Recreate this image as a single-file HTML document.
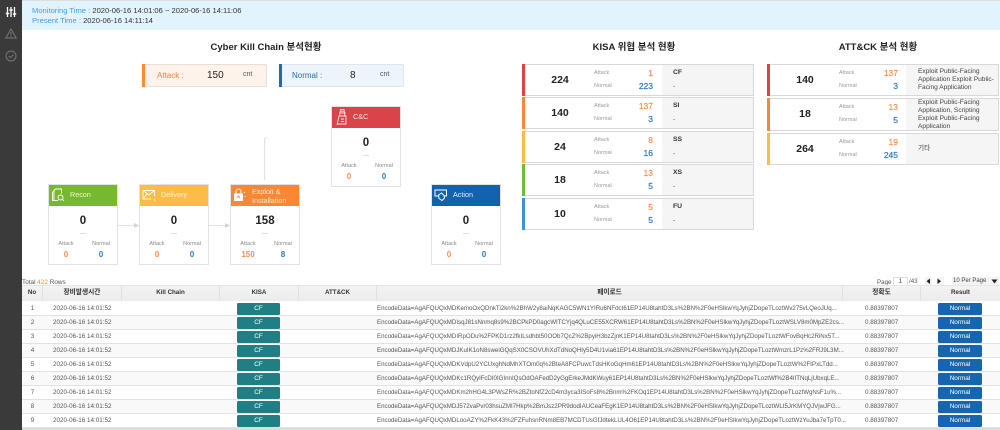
<!DOCTYPE html>
<html lang="ko"><head><meta charset="utf-8"><title>Dashboard</title>
<style>
*{box-sizing:border-box}
html,body{margin:0;padding:0;width:1000px;height:430px;overflow:hidden;background:#fff}
body{font-family:"Liberation Sans","Noto Sans CJK KR",sans-serif;color:#333;position:relative;filter:blur(.3px)}
div{position:absolute;white-space:nowrap}
.side{left:0;top:0;width:22px;height:430px;background:#3a3a3a}
.top{left:22px;top:1px;width:978px;height:29px;background:#e1f3fd}
.tt{left:32px;font-size:7.6px;color:#333;line-height:10px}
.tt b{font-weight:400;color:#3f9fee}
.h{font-size:9.5px;font-weight:700;color:#222;text-align:center;line-height:12px}
.sum{top:64px;height:23px;width:125px;border:1px solid #eadfd6;border-radius:2px}
.card{width:70px;height:81px;background:#fff;border:1px solid #e2e2e2}
.card .hd{left:0;top:0;width:68px;height:21px;color:#fff;font-size:7.2px;line-height:9px}
.card .n{left:0;width:68px;top:30px;text-align:center;font-size:11.5px;font-weight:700;color:#222;line-height:12px}
.card .d{left:31px;top:48px;width:6px;height:1px;background:#ddd}
.card .l{top:56px;width:24px;text-align:center;font-size:5.5px;color:#888;line-height:7px}
.card .v{top:65px;width:24px;text-align:center;font-size:8px;font-weight:700;line-height:10px}
.card .l1,.card .v1{left:5px}
.card .l2,.card .v2{left:40px}
.o{color:#f98e52}.b{color:#3178bd}
.row{height:32px;background:#fff;border:1px solid #d8d8d8;border-width:1px 1px 1px 0;width:232px}
.row .bar{left:0;top:-1px;width:3px;height:32px}
.row .g{top:0;bottom:0;right:0;background:#f5f5f5}
.row .big{left:3px;width:70px;top:9px;text-align:center;font-size:10.5px;font-weight:700;color:#222;line-height:12px}
.row .la{left:72px;font-size:5.5px;color:#999;line-height:7px}
.row .va{right:100px;font-size:8.5px;font-weight:400;-webkit-text-stroke:.2px;line-height:10px;text-align:right}
.row .c{left:151px;font-size:6.8px;font-weight:700;color:#333;line-height:9px}
.row .e{font-size:6.6px;color:#444;line-height:8px;left:147px;white-space:normal;width:84px}
.th{top:285px;height:16px;background:linear-gradient(#f3f3f3,#ececec);border-right:1px solid #e0e0e0;border-top:1px solid #e6e6e6;text-align:center;font-size:6.2px;font-weight:700;color:#333;line-height:13px}
.th.k{font-size:6.7px}
.tr{left:22px;width:978px;height:14px;border-bottom:1px solid #e2e2e2}
.tr.alt{background:#f9f9f9}
.td{font-size:6.3px;color:#555;line-height:13px;top:0}
.pl{font-size:6.15px;left:355px}
.bd{top:1px;height:12px;width:43px;border-radius:1.5px;color:#fff;text-align:center;font-size:6.4px;line-height:12px}
</style></head><body>
<div style="left:0;top:0;width:1000px;height:1px;background:#ddd"></div>
<div class="side"></div>
<svg style="position:absolute;left:5px;top:6px" width="12" height="12" viewBox="0 0 12 12" fill="none" stroke="#fff" stroke-width="1.3"><path d="M2.5 1v10M6 1v10M9.5 1v10"/><path d="M.8 7.5h3.4M4.3 4h3.4M7.8 8h3.4" stroke-width="1.6"/></svg>
<svg style="position:absolute;left:5px;top:28px" width="12" height="11" viewBox="0 0 12 11" fill="none" stroke="#777" stroke-width="1"><path d="M6 1 11.2 10H.8z"/><path d="M6 4v3.4M6 8.2v1"/></svg>
<svg style="position:absolute;left:5px;top:50px" width="12" height="12" viewBox="0 0 12 12" fill="none" stroke="#777" stroke-width="1"><circle cx="6" cy="6" r="5"/><path d="M3.7 6.1 5.3 7.6 8.4 4.7"/></svg>
<div class="top"></div>
<div class="tt" style="top:6px"><b>Monitoring Time :</b> 2020-06-16 14:01:06 ~ 2020-06-16 14:11:06</div>
<div class="tt" style="top:16px"><b>Present Time :</b> 2020-06-16 14:11:14</div>

<div class="h" style="left:160px;width:212px;top:42px">Cyber Kill Chain 분석현황</div>
<div class="h" style="left:518px;width:232px;top:42px">KISA 위협 분석 현황</div>
<div class="h" style="left:762px;width:232px;top:42px">ATT&amp;CK 분석 현황</div>

<div class="sum" style="left:142px;background:#fef3eb"><div style="left:-1px;top:-1px;width:3px;height:23px;background:#f98a37"></div><div style="left:14px;top:6px;font-size:8px;color:#f3823c;line-height:9px">Attack :</div><div style="left:64px;top:4px;font-size:10px;color:#222;line-height:13px">150</div><div style="left:100px;top:6px;font-size:7px;color:#555;line-height:8px">cnt</div></div>
<div class="sum" style="left:279px;background:#eef4fb;border-color:#dfe5ec"><div style="left:-1px;top:-1px;width:3px;height:23px;background:#1a6bb8"></div><div style="left:12px;top:6px;font-size:8px;color:#2a6ba8;line-height:9px">Normal :</div><div style="left:70px;top:4px;font-size:10px;color:#222;line-height:13px">8</div><div style="left:100px;top:6px;font-size:7px;color:#555;line-height:8px">cnt</div></div>

<svg style="position:absolute;left:118px;top:130px" width="160" height="100" viewBox="0 0 160 100" fill="none" stroke="#e2e2e2" stroke-width="1"><path d="M0 95.5H18M91 95.5H109"/><path d="M146.500 50V10Q146.500 7.500 148.500 7.500" stroke-width="1.200"/><path d="M16 93 21 95.500 16 98zM107 93 112 95.500 107 98z" fill="#d4d4d4" stroke="none"/></svg>

<div class="card" style="left:48px;top:184px"><div class="hd" style="background:#76b82f"><svg style="position:absolute;left:2px;top:3px" width="14" height="14" viewBox="0 0 14 14" fill="none" stroke="#fff" stroke-width=".9"><path d="M3 2.500 4.500 1H10.500V5.500M7 12.500H1.500V4.500L3 2.500V12"/><circle cx="9.500" cy="9.500" r="2.500"/><path d="M11.500 11.500 13 13"/></svg><div style="left:21px;top:5px;color:#ecf7dc">Recon</div></div><div class="n">0</div><div class="d"></div><div class="l l1">Attack</div><div class="l l2">Normal</div><div class="v v1 o">0</div><div class="v v2 b">0</div></div>

<div class="card" style="left:139px;top:184px"><div class="hd" style="background:#fdbc48"><svg style="position:absolute;left:2px;top:4px" width="15" height="13" viewBox="0 0 15 13" fill="none" stroke="#fff" stroke-width=".9"><path d="M1 1.500H12.500V7M9 10H1V1.500L6.800 6 12.500 1.500M1 10 5 5M12 10.500l1 1"/></svg><div style="left:21px;top:5px;color:#fdf1d6">Delivery</div></div><div class="n">0</div><div class="d"></div><div class="l l1">Attack</div><div class="l l2">Normal</div><div class="v v1 o">0</div><div class="v v2 b">0</div></div>

<div class="card" style="left:230px;top:184px"><div class="hd" style="background:#f98734"><svg style="position:absolute;left:2px;top:3px" width="14" height="14" viewBox="0 0 14 14" fill="none" stroke="#fff" stroke-width="1"><rect x="1.500" y="6" width="8" height="6.500" fill="#fff"/><path d="M3 6V3.500A2.500 2.500 0 0 1 8 3.500V6M11 4l1 1M12 8v1"/><path d="M4 9.500 5.500 8 7 10" stroke="#f98734"/></svg><div style="left:21px;top:2px;color:#fdebd9;white-space:normal;width:45px">Exploit &amp; Installation</div></div><div class="n">158</div><div class="d"></div><div class="l l1">Attack</div><div class="l l2">Normal</div><div class="v v1 o">150</div><div class="v v2 b">8</div></div>

<div class="card" style="left:331px;top:106px"><div class="hd" style="background:#d94349"><svg style="position:absolute;left:2px;top:1px" width="14" height="18" viewBox="0 0 14 18" fill="none" stroke="#fbe3e3" stroke-width=".9"><path d="M3 17 5 8H12V16H3M7 11H10M7 13.500H10"/><path d="M6 8 5.500 5H11L10.500 8M6 5 6.500 1.500H10L10.500 5M6 3.200H10.500"/></svg><div style="left:21px;top:5px;color:#fbe3e3">C&amp;C</div></div><div class="n">0</div><div class="d"></div><div class="l l1">Attack</div><div class="l l2">Normal</div><div class="v v1 o">0</div><div class="v v2 b">0</div></div>

<div class="card" style="left:431px;top:184px"><div class="hd" style="background:#1362ae"><svg style="position:absolute;left:2px;top:3px" width="14" height="14" viewBox="0 0 14 14" fill="none" stroke="#fff" stroke-width="1"><path d="M1 2H12.500V8H1z"/><path d="M4.500 7 7.500 5 10 7.500 10.500 10 8 12.500 5 10.500z" fill="#1362ae"/></svg><div style="left:21px;top:5px;color:#e3effa">Action</div></div><div class="n">0</div><div class="d"></div><div class="l l1">Attack</div><div class="l l2">Normal</div><div class="v v1 o">0</div><div class="v v2 b">0</div></div>

<!-- KISA -->
<div class="row" style="left:522px;top:64px"><div class="bar" style="background:#d94349"></div><div class="g" style="left:140px;width:91px"></div><div class="big">224</div><div class="la" style="top:5px">Attack</div><div class="la" style="top:18px">Normal</div><div class="va o" style="top:3px">1</div><div class="va b" style="top:16px">223</div><div class="c" style="top:3px">CF</div><div class="e" style="left:151px;top:18px">-</div></div>
<div class="row" style="left:522px;top:97px"><div class="bar" style="background:#f98734"></div><div class="g" style="left:140px;width:91px"></div><div class="big">140</div><div class="la" style="top:5px">Attack</div><div class="la" style="top:18px">Normal</div><div class="va o" style="top:3px">137</div><div class="va b" style="top:16px">3</div><div class="c" style="top:3px">SI</div><div class="e" style="left:151px;top:18px">-</div></div>
<div class="row" style="left:522px;top:131px"><div class="bar" style="background:#fdbc48"></div><div class="g" style="left:140px;width:91px"></div><div class="big">24</div><div class="la" style="top:5px">Attack</div><div class="la" style="top:18px">Normal</div><div class="va o" style="top:3px">8</div><div class="va b" style="top:16px">16</div><div class="c" style="top:3px">SS</div><div class="e" style="left:151px;top:18px">-</div></div>
<div class="row" style="left:522px;top:164px"><div class="bar" style="background:#76b82f"></div><div class="g" style="left:140px;width:91px"></div><div class="big">18</div><div class="la" style="top:5px">Attack</div><div class="la" style="top:18px">Normal</div><div class="va o" style="top:3px">13</div><div class="va b" style="top:16px">5</div><div class="c" style="top:3px">XS</div><div class="e" style="left:151px;top:18px">-</div></div>
<div class="row" style="left:522px;top:198px"><div class="bar" style="background:#3c93d8"></div><div class="g" style="left:140px;width:91px"></div><div class="big">10</div><div class="la" style="top:5px">Attack</div><div class="la" style="top:18px">Normal</div><div class="va o" style="top:3px">5</div><div class="va b" style="top:16px">5</div><div class="c" style="top:3px">FU</div><div class="e" style="left:151px;top:18px">-</div></div>

<!-- ATT&CK -->
<div class="row" style="left:767px;top:64px"><div class="bar" style="background:#d94349"></div><div class="g" style="left:139px;width:92px"></div><div class="big">140</div><div class="la" style="top:5px">Attack</div><div class="la" style="top:18px">Normal</div><div class="va o" style="top:3px">137</div><div class="va b" style="top:16px">3</div><div class="e" style="left:151px;top:3px;width:80px">Exploit Public-Facing Application Exploit Public-Facing Application</div></div>
<div class="row" style="left:767px;top:98px;height:33px"><div class="bar" style="background:#f98734;height:33px"></div><div class="g" style="left:139px;width:92px"></div><div class="big">18</div><div class="la" style="top:5px">Attack</div><div class="la" style="top:18px">Normal</div><div class="va o" style="top:3px">13</div><div class="va b" style="top:16px">5</div><div class="e" style="left:151px;top:0;width:80px">Exploit Public-Facing Application, Scripting Exploit Public-Facing Application</div></div>
<div class="row" style="left:767px;top:133px"><div class="bar" style="background:#fdbc48"></div><div class="g" style="left:139px;width:92px"></div><div class="big">264</div><div class="la" style="top:5px">Attack</div><div class="la" style="top:18px">Normal</div><div class="va o" style="top:3px">19</div><div class="va b" style="top:16px">245</div><div class="e" style="left:151px;top:11px;width:80px">기타</div></div>

<!-- Table toolbar -->
<div style="left:22px;top:278px;font-size:6.4px;line-height:9px;color:#555">Total <span style="color:#f98734">422</span> Rows</div>
<div style="left:877px;top:278px;font-size:6.2px;line-height:9px;color:#555">Page</div>
<div style="left:893px;top:277px;width:15px;height:9px;border:1px solid #ddd;font-size:6.2px;line-height:7px;text-align:center;color:#444">1</div>
<div style="left:909px;top:278px;font-size:6.2px;line-height:8px;color:#555">/43</div>
<div style="left:925px;top:277px;width:7px;height:8px;background:#f3f3f3"></div>
<div style="left:937px;top:277px;width:7px;height:8px;background:#f3f3f3"></div>
<svg style="position:absolute;left:925px;top:278px" width="20" height="7" viewBox="0 0 20 7" fill="#222"><path d="M5 .5V6L1.500 3.200zM12.500 .5V6L16 3.200z"/></svg>
<div style="left:952px;top:277px;width:47px;height:9px;background:#f3f3f3;font-size:6px;line-height:9px;color:#444;padding-left:1px">10 Per Page</div>
<svg style="position:absolute;left:991px;top:279px" width="7" height="5" viewBox="0 0 7 5" fill="#222"><path d="M.5 .5H6.500L3.500 4.500z"/></svg>

<!-- Table head -->
<div class="th" style="left:22px;width:21px">No</div>
<div class="th k" style="left:43px;width:79px">장비발생시간</div>
<div class="th" style="left:122px;width:98px">Kill Chain</div>
<div class="th" style="left:220px;width:79px">KISA</div>
<div class="th" style="left:299px;width:78px">ATT&amp;CK</div>
<div class="th k" style="left:377px;width:466px">페이로드</div>
<div class="th k" style="left:843px;width:78px">정확도</div>
<div class="th" style="left:921px;width:79px;border-right:0">Result</div>

<div class="tr" style="top:302px"><div class="td" style="left:0;width:21px;text-align:center">1</div><div class="td" style="left:31px">2020-06-16 14:01:52</div><div class="bd" style="left:215px;background:#1f7f85">CF</div><div class="td pl">EncodeData=AgAFQUQxMDKemoOxQDnkTi2kn%2BhW2y8aiNqKAGC5WN1YIRu6NFdct61EP14U8tahtD3Ls%2BN%2F0eHSlkwYqJyhjZDopeTLoztWv275vLQeoJUq...</div><div class="td" style="left:843px">0.88397807</div><div class="bd" style="left:916px;width:44px;background:#1565b0">Normal</div></div>
<div class="tr alt" style="top:316px"><div class="td" style="left:0;width:21px;text-align:center">2</div><div class="td" style="left:31px">2020-06-16 14:01:52</div><div class="bd" style="left:215px;background:#1f7f85">CF</div><div class="td pl">EncodeData=AgAFQUQxMDIsqJ81sNnmq8s9%2BCPkPD0agcWITCYjq4QLuCE55XCRW61EP14U8tahtD3Ls%2BN%2F0eHSlkwYqJyhjZDopeTLoztWSLV8m0MpZE2cs...</div><div class="td" style="left:843px">0.88397807</div><div class="bd" style="left:916px;width:44px;background:#1565b0">Normal</div></div>
<div class="tr" style="top:330px"><div class="td" style="left:0;width:21px;text-align:center">3</div><div class="td" style="left:31px">2020-06-16 14:01:52</div><div class="bd" style="left:215px;background:#1f7f85">CF</div><div class="td pl">EncodeData=AgAFQUQxMDIRpODu%2FPKD1rz2fkILsdhbt50OOb7QcZ%2BpyiH3bzZjnK1EP14U8tahtD3Ls%2BN%2F0eHSlkwYqJyhjZDopeTLoztWFovBqHc2RiNx5T...</div><div class="td" style="left:843px">0.88397807</div><div class="bd" style="left:916px;width:44px;background:#1565b0">Normal</div></div>
<div class="tr alt" style="top:344px"><div class="td" style="left:0;width:21px;text-align:center">4</div><div class="td" style="left:31px">2020-06-16 14:01:52</div><div class="bd" style="left:215px;background:#1f7f85">CF</div><div class="td pl">EncodeData=AgAFQUQxMDJKuIK1oN8sweiGQqSX0CSOVUhXdTdNoQHIy5D4U1via61EP14U8tahtD3Ls%2BN%2F0eHSlkwYqJyhjZDopeTLoztWmzrL1Pz%2FRJ9L3M...</div><div class="td" style="left:843px">0.88397807</div><div class="bd" style="left:916px;width:44px;background:#1565b0">Normal</div></div>
<div class="tr" style="top:358px"><div class="td" style="left:0;width:21px;text-align:center">5</div><div class="td" style="left:31px">2020-06-16 14:01:52</div><div class="bd" style="left:215px;background:#1f7f85">CF</div><div class="td pl">EncodeData=AgAFQUQxMDKVdpU2YCUxghNdMhXTOm0q%2BteA8FCPuwcTdsHKoGqHm61EP14U8tahtD3Ls%2BN%2F0eHSlkwYqJyhjZDopeTLoztW%2FtPxLTdd...</div><div class="td" style="left:843px">0.88397807</div><div class="bd" style="left:916px;width:44px;background:#1565b0">Normal</div></div>
<div class="tr alt" style="top:372px"><div class="td" style="left:0;width:21px;text-align:center">6</div><div class="td" style="left:31px">2020-06-16 14:01:52</div><div class="bd" style="left:215px;background:#1f7f85">CF</div><div class="td pl">EncodeData=AgAFQUQxMDKc1RQylFcDI0IGInnIQsOdOAFedD2yGgErkeJMdKWuy61EP14U8tahtD3Ls%2BN%2F0eHSlkwYqJyhjZDopeTLoztWf%2B4IITNqLjUbxqLE...</div><div class="td" style="left:843px">0.88397807</div><div class="bd" style="left:916px;width:44px;background:#1565b0">Normal</div></div>
<div class="tr" style="top:386px"><div class="td" style="left:0;width:21px;text-align:center">7</div><div class="td" style="left:31px">2020-06-16 14:01:52</div><div class="bd" style="left:215px;background:#1f7f85">CF</div><div class="td pl">EncodeData=AgAFQUQxMDKm2hHG4L3PWsZR%2BZtoNfZ2cD4m3yca3ISoFs8%2Bnm%2FKOq1EP14U8tahtD3Ls%2BN%2F0eHSlkwYqJyhjZDopeTLoztWgNsF1u%...</div><div class="td" style="left:843px">0.88397807</div><div class="bd" style="left:916px;width:44px;background:#1565b0">Normal</div></div>
<div class="tr alt" style="top:400px"><div class="td" style="left:0;width:21px;text-align:center">8</div><div class="td" style="left:31px">2020-06-16 14:01:52</div><div class="bd" style="left:215px;background:#1f7f85">CF</div><div class="td pl">EncodeData=AgAFQUQxMDJ572vaPvr03hsuZMI7Hkp%2BmJsz2PR9dodIAUCeaFEgK1EP14U8tahtD3Ls%2BN%2F0eHSlkwYqJyhjZDopeTLoztWLt5JrKMYQJVjwJFG...</div><div class="td" style="left:843px">0.88397807</div><div class="bd" style="left:916px;width:44px;background:#1565b0">Normal</div></div>
<div class="tr" style="top:414px"><div class="td" style="left:0;width:21px;text-align:center">9</div><div class="td" style="left:31px">2020-06-16 14:01:52</div><div class="bd" style="left:215px;background:#1f7f85">CF</div><div class="td pl">EncodeData=AgAFQUQxMDLooAZY%2FkK43%2FZFuhsnRNm8EB7MCDTUsGfJdtekLUL4O61EP14U8tahtD3Ls%2BN%2F0eHSlkwYqJyhjZDopeTLoztWzYuJba7eTpT0...</div><div class="td" style="left:843px">0.88397807</div><div class="bd" style="left:916px;width:44px;background:#1565b0">Normal</div></div>
<div style="left:22px;top:428px;width:978px;height:2px;background:#dcdcdc"></div>
</body></html>
